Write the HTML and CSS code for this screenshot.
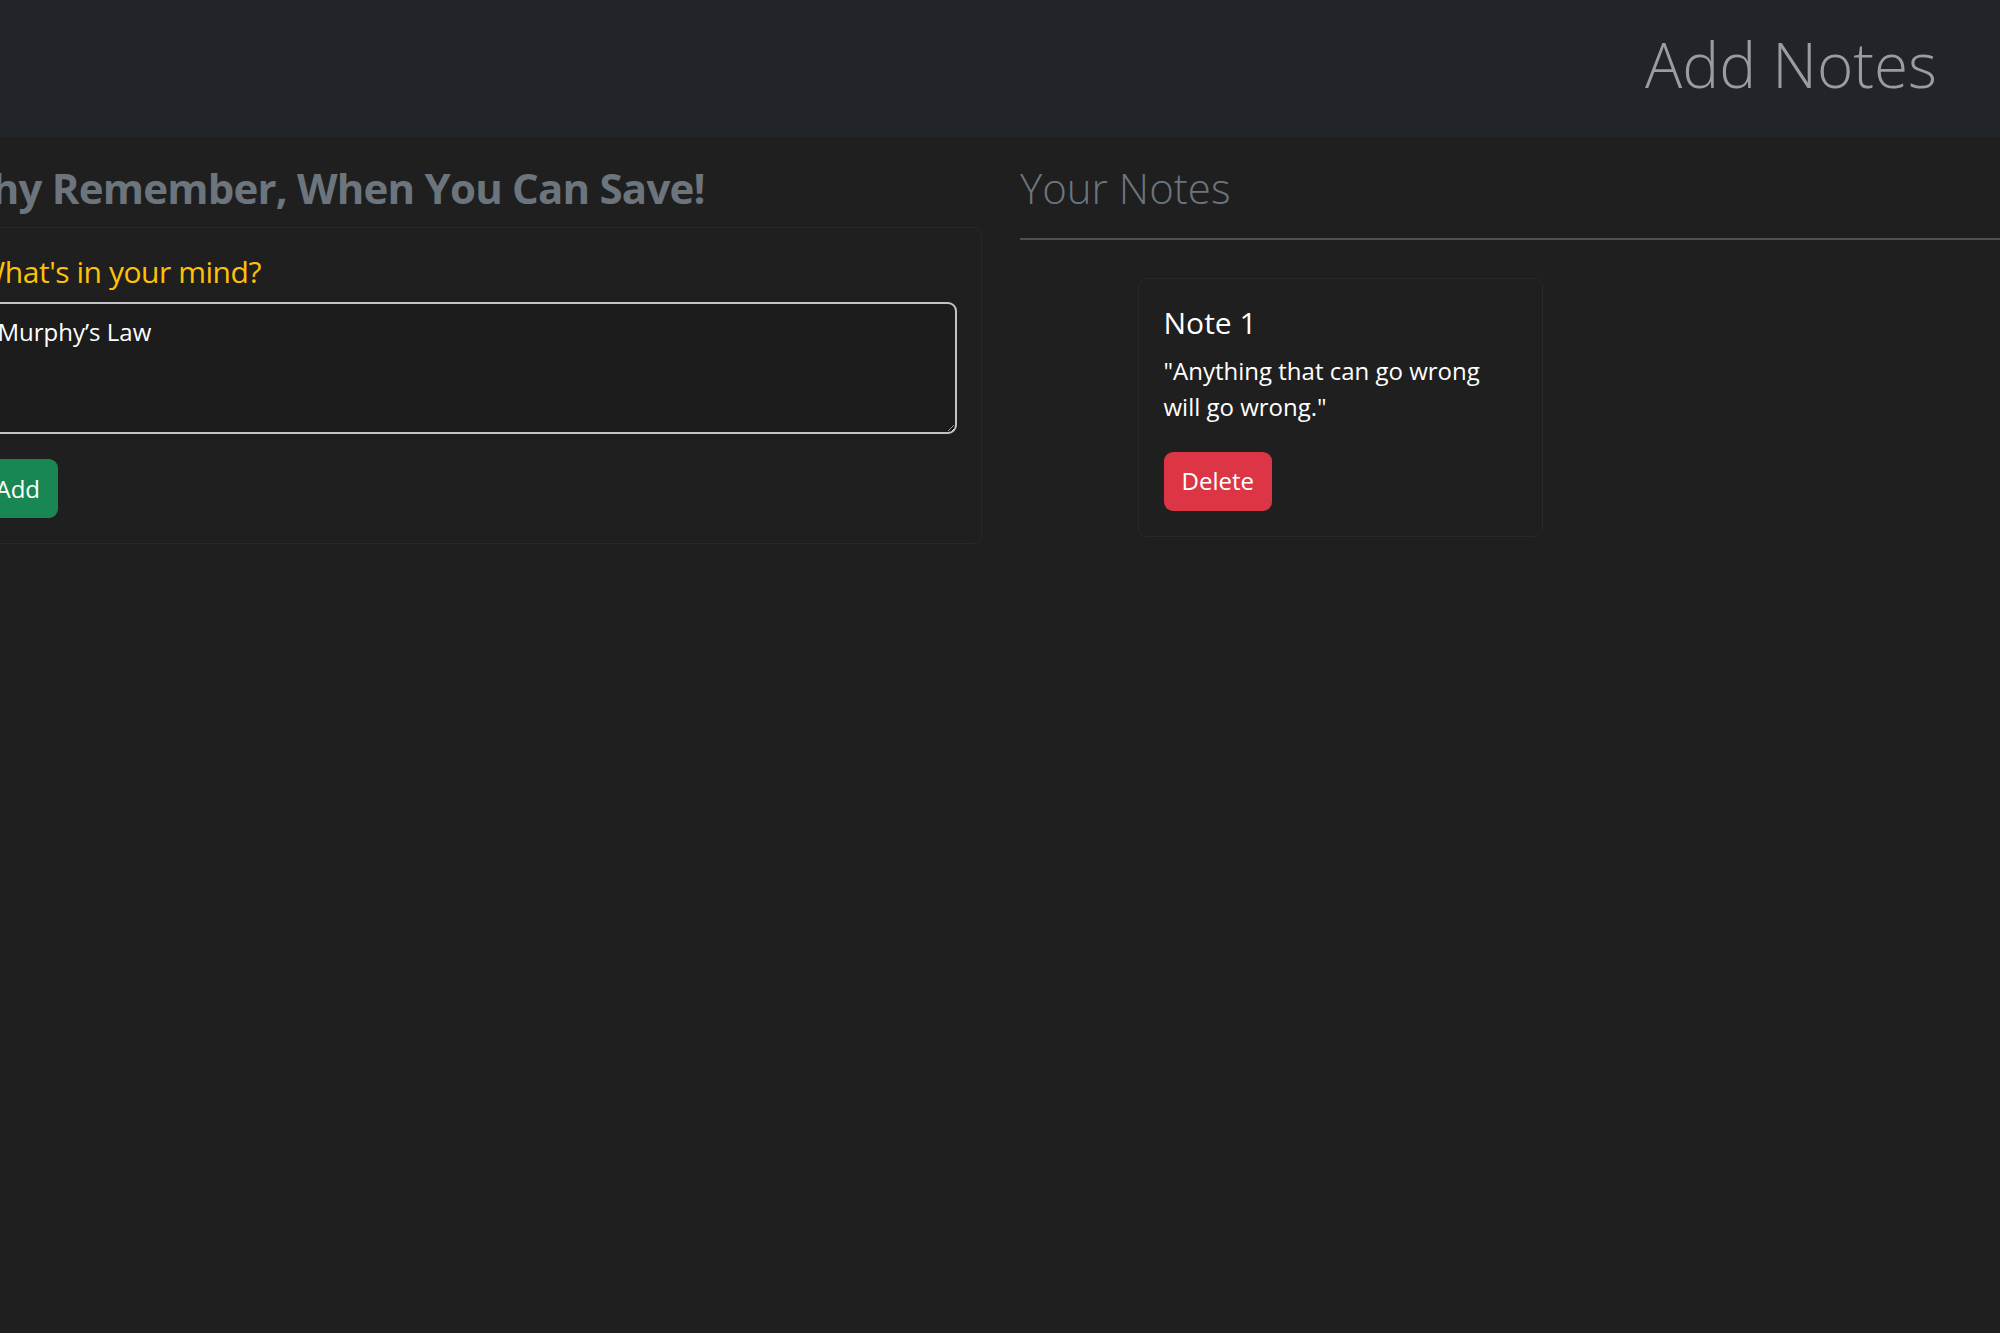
FILE: index.html
```html
<!DOCTYPE html>
<html lang="en">
<head>
<meta charset="utf-8">
<title>Add Notes</title>
<link rel="stylesheet" href="styles.css">
</head>
<body>
<nav class="navbar">
  <a class="brand" href="#">Add Notes</a>
</nav>
<main class="main">
  <section class="col-left">
    <h3 class="tagline">Why Remember, When You Can Save!</h3>
    <div class="card form-card">
      <label class="label" for="note">What's in your mind?</label>
      <textarea id="note" class="textarea">Murphy’s Law</textarea>
      <button class="btn btn-add" type="button">Add</button>
    </div>
  </section>
  <section class="col-right">
    <h3 class="notes-title">Your Notes</h3>
    <hr class="divider">
    <div class="card note-card">
      <h5 class="note-title">Note 1</h5>
      <p class="note-text">"Anything that can go wrong will go wrong."</p>
      <button class="btn btn-delete" type="button">Delete</button>
    </div>
  </section>
</main>
</body>
</html>
```

FILE: styles.css
```css
html, body {
  margin: 0;
  padding: 0;
  background: #1f1f1f;
  overflow: hidden;
}

body {
  font-family: "Open Sans", "Noto Sans", sans-serif;
  color: #ffffff;
  min-height: 1333px;
}

.navbar {
  height: 137px;
  box-sizing: border-box;
  background: #212529;
  display: flex;
  justify-content: flex-end;
  align-items: flex-start;
  padding: 27px 63px 0 0;
}

.brand {
  font-size: 62px;
  line-height: 74px;
  font-weight: 300;
  color: #9b9c9e;
  text-decoration: none;
}

.main {
  display: flex;
  gap: 38px;
  margin-left: -48px;
  padding-top: 26px;
}

.col-left {
  flex: none;
  width: 1030px;
}

.col-right {
  flex: 1;
  min-width: 0;
}

.tagline {
  margin: 0 0 14px 0;
  font-size: 42px;
  line-height: 50px;
  font-weight: 700;
  letter-spacing: -0.8px;
  color: #6c757d;
}

.notes-title {
  margin: 0;
  font-size: 42px;
  line-height: 50px;
  font-weight: 300;
  color: #6c757d;
}

.card {
  box-sizing: border-box;
  border: 1px solid #292929;
  border-radius: 9px;
  background: #1f1f1f;
  padding: 25.5px 24.5px 24.5px 24.5px;
}

.form-card {
  display: flex;
  flex-direction: column;
  align-items: flex-start;
}

.label {
  font-size: 30px;
  line-height: 36px;
  letter-spacing: -0.45px;
  color: #ffc107;
  margin-bottom: 12.5px;
}

.textarea {
  box-sizing: border-box;
  width: 100%;
  height: 132px;
  margin: 0 0 25px 0;
  padding: 9.5px 18px 9px 18px;
  border: 2px solid #c3c3c3;
  border-radius: 9px;
  background: #1c1c1c;
  color: #ffffff;
  font-family: "Open Sans", "Noto Sans", sans-serif;
  font-size: 24px;
  line-height: 36px;
  resize: vertical;
  outline: none;
}

.btn {
  font-family: "Open Sans", "Noto Sans", sans-serif;
  font-size: 24px;
  line-height: 36px;
  color: #ffffff;
  border: 0;
  border-radius: 9px;
  padding: 11.5px 18px;
  cursor: pointer;
}

.btn-add {
  background: #198754;
}

.btn-delete {
  background: #dc3545;
}

.divider {
  margin: 25px 0 0 0;
  border: 0;
  height: 2px;
  background: #505050;
}

.note-card {
  width: 405px;
  margin: 38px 0 0 118px;
  padding-bottom: 25px;
}

.note-title {
  margin: 0 0 12px 0;
  font-size: 30px;
  line-height: 36px;
  font-weight: 400;
  color: #ffffff;
}

.note-text {
  margin: 2.5px 0 27px 0;
  max-width: 340px;
  font-size: 24px;
  line-height: 36px;
  color: #ffffff;
}
```
